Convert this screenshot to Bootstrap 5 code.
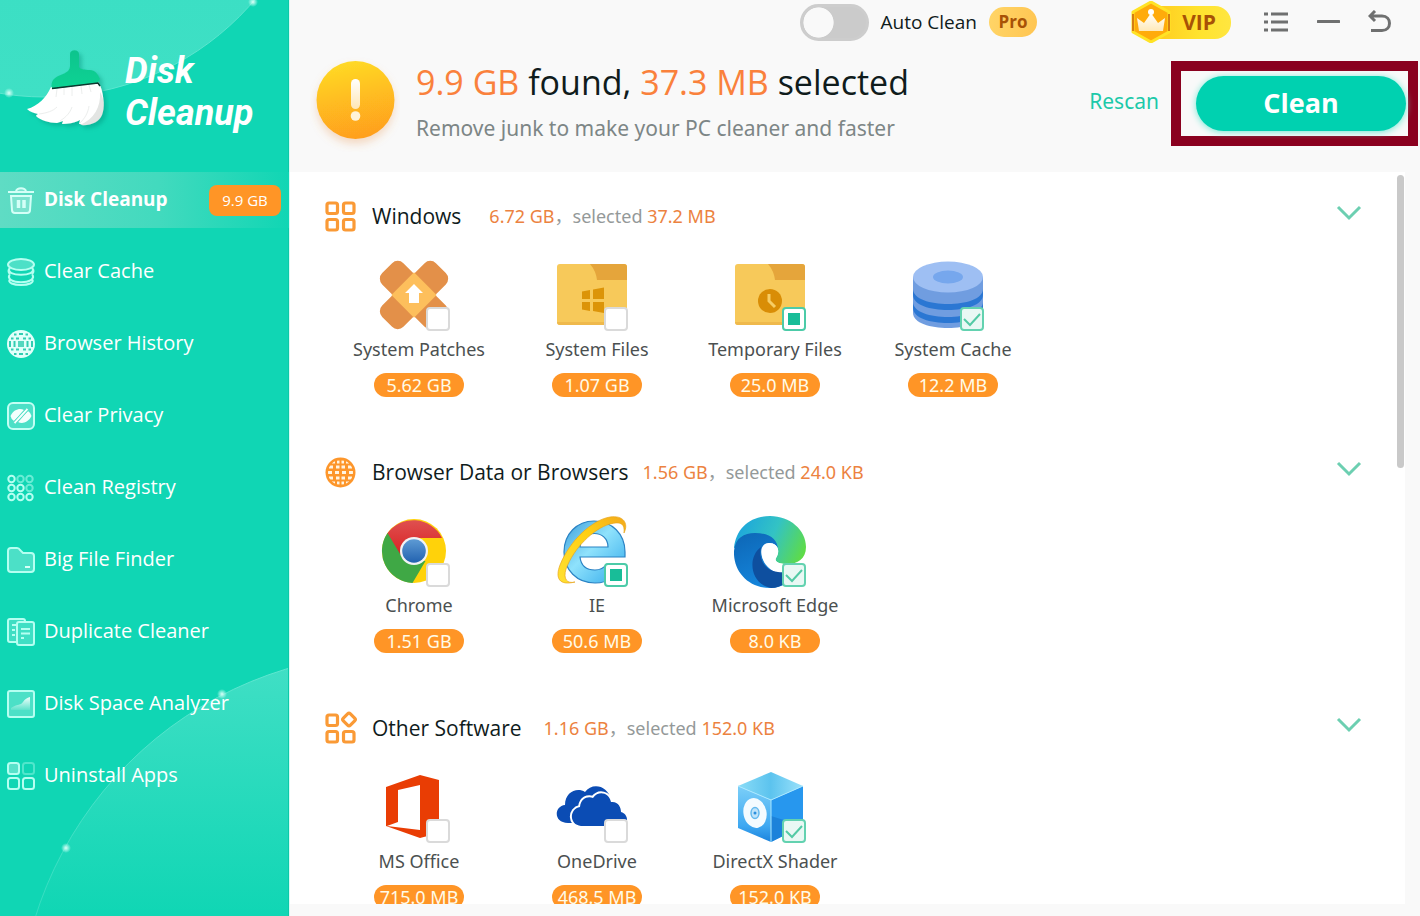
<!DOCTYPE html>
<html lang="en">
<head>
<meta charset="utf-8">
<meta name="viewport" content="width=device-width, initial-scale=1">
<title>Disk Cleanup</title>
<link href="https://cdn.jsdelivr.net/npm/bootstrap@5.3.0/dist/css/bootstrap.min.css" rel="stylesheet">
<style>
:root { --teal:#10d6b4; --orange:#ff9526; --num:#ec8240; }
body { font-family:"Open Sans","Noto Sans","Noto Sans CJK SC",sans-serif; background:#f9f9f9; color:#101c1c; }
a { text-decoration:none; }
svg { display:block; flex-shrink:0; }

.side { flex:0 0 290px; background:var(--teal); border-right:1px solid #d5fbf5; box-shadow:inset -1px 0 0 #0cc9a8; }
.deco-top { top:0; left:0; }
.deco-bottom { bottom:0; right:1px; }
.brand { height:172px; padding:12px 0 0 24px; gap:16px; }
.brand-name { font:italic 700 36px/42px Roboto,sans-serif; color:#fff; }
.menu { gap:16px; }
.menu-link { height:56px; padding:0 8px 0 7px; gap:9px; color:#fff; font-size:20px; }
.menu-link span { padding-bottom:2px; }
.menu-link.active { font-size:19px; font-weight:700; background:linear-gradient(90deg,#5fdcc4 0,#42dabe 55%,var(--teal) 100%); }
.menu-link .size-tag { background:var(--orange); border-radius:8px; width:72px; height:31px; font-size:15px; line-height:31px; font-weight:400; }

.topbar { height:44px; padding-right:28px; }
.auto-switch.form-check-input { width:69px; height:37px; margin:0; border:3px solid #cdcdcd; border-radius:19px; background-color:#cbcbcb; background-image:radial-gradient(circle closest-side,#f9f9f9 95%,transparent); background-size:31px 31px; background-repeat:no-repeat; background-position:left center; }
.auto-label { font-size:19px; line-height:28px; }
.pro { width:48px; height:30px; margin-left:12px; border-radius:15px; line-height:29px; font-size:17px; font-weight:700; color:#a85206; background:linear-gradient(100deg,#ffd567,#ffc552); }
.vip { color:#a85206; font-size:21px; font-weight:700; height:42px; width:100px; margin-left:94px; }
.vip-plate { left:20px; right:0; top:5px; height:33px; border-radius:4px 16px 16px 4px; background:linear-gradient(90deg,#ffc91e,#ffe32e 60%,#ffe640); line-height:33px; padding-right:15px; }
.vip-gem { left:0; top:0; }
.bare { background:none; border:0; padding:0; }

.summary { height:128px; padding:0 2px 0 20px; gap:16px; }
.headline { padding-top:14px; }
.found { font-size:34px; line-height:48px; }
.hint { font-family:"Noto Sans",sans-serif; font-size:21px; line-height:44px; color:#7d8686; }
.hot { color:#fa813c; }
.actions { padding-top:17px; }
.rescan { font-family:"Noto Sans",sans-serif; color:#1cc9a9; font-size:21px; padding-bottom:4px; }
.frame { border:10px solid #8a001f; padding:5px 2px 5px 15px; }
.clean { display:block; width:210px; height:55px; border:0; border-radius:28px; background:#00d1b0; color:#fff; font-size:27px; font-weight:700; box-shadow:0 1px 7px #6fe8d4; }
.clean:hover { background:#00c5a6; }

.results { background:#fff; margin:0 15px 12px 0; }
.scroll-thumb { top:3px; right:1px; width:7px; height:293px; border-radius:4px; background:#c9c9c9; }
.group-head { height:88px; padding:0 43px 0 34px; }
.group-title { font-size:21px; line-height:32px; margin:0 0 0 16px; font-weight:400; }
.stat { font-family:"Noto Sans","Noto Sans CJK SC",sans-serif; font-size:18px; line-height:32px; color:#949999; }
.stat b { font-weight:400; color:var(--num); }
.after-wide { margin-left:28px; }
.after-mid { margin-left:22px; }
.after-tight { margin-left:14px; }
.tiles { padding:0 40px 31px; }
.tile { width:178px; }
.art { width:72px; height:72px; margin-right:10px; }
.tick.form-check-input { right:0; bottom:1px; width:24px; height:24px; margin:0; border:2px solid #dadada; border-radius:4px; background-color:#fff; background-size:100% 100%; }
.tick.form-check-input:checked { border-color:#63d2b0; background-color:#e9f8f4; background-image:url("data:image/svg+xml,%3Csvg xmlns='http://www.w3.org/2000/svg' viewBox='0 0 20 20'%3E%3Cpath d='M2 10l6 6 10-11' fill='none' stroke='%2353caa5' stroke-width='2'/%3E%3C/svg%3E"); }
.tick.form-check-input[type=checkbox]:indeterminate { border-color:#4ccba8; background-color:#fff; background-image:url("data:image/svg+xml,%3Csvg xmlns='http://www.w3.org/2000/svg' viewBox='0 0 20 20'%3E%3Cpath d='M4 4h12v12H4z' fill='%2318bd98'/%3E%3C/svg%3E"); }
.tile-name { font-family:"Noto Sans",sans-serif; font-size:18px; line-height:34px; color:#4b5050; }
.pill { font-family:"Noto Sans",sans-serif; width:90px; height:24px; margin-top:7px; border-radius:12px; background:var(--orange); color:#fffbe8; font-size:18px; line-height:24px; }
</style>
</head>
<body>
<div class="d-flex vh-100 overflow-hidden">

<aside class="side position-relative overflow-hidden">
  <svg class="deco-top position-absolute" width="289" height="110" viewBox="0 0 289 110" aria-hidden="true">
    <defs><linearGradient id="dt" x1="0" y1="0" x2="0" y2="1"><stop offset="0.6" stop-color="#38dec3"/><stop offset="1" stop-color="#3fe0c5"/></linearGradient>
    <radialGradient id="sp"><stop offset="0" stop-color="#dffff8"/><stop offset=".4" stop-color="#bffbf0" stop-opacity=".7"/><stop offset="1" stop-color="#bffbf0" stop-opacity="0"/></radialGradient></defs>
    <circle cx="45" cy="-178" r="275" fill="url(#dt)" stroke="#5be6cf"/>
    <circle cx="9" cy="93" r="5" fill="url(#sp)"/><circle cx="253" cy="2" r="5" fill="url(#sp)"/>
  </svg>
  <svg class="deco-bottom position-absolute" width="289" height="250" viewBox="0 0 289 250" aria-hidden="true">
    <defs><linearGradient id="db" gradientUnits="userSpaceOnUse" x1="0" y1="0" x2="0" y2="250"><stop offset="0" stop-color="#40dfc5"/><stop offset="1" stop-color="#10d6b4"/></linearGradient>
    <linearGradient id="dl" gradientUnits="userSpaceOnUse" x1="0" y1="0" x2="0" y2="250"><stop offset="0" stop-color="#5fe6d0"/><stop offset="1" stop-color="#34ddc0"/></linearGradient></defs>
    <circle cx="396" cy="364" r="377" fill="url(#db)" stroke="url(#dl)"/>
    <circle cx="223" cy="28" r="5" fill="url(#sp)"/><circle cx="67" cy="182" r="5" fill="url(#sp)"/>
  </svg>

  <div class="brand d-flex align-items-center position-relative">
    <svg width="85" height="90" viewBox="0 0 85 90" aria-hidden="true">
      <defs><linearGradient id="bh" x1="0" y1="0" x2="0" y2="1"><stop offset="0" stop-color="#0fc48d"/><stop offset="1" stop-color="#0bd394"/></linearGradient>
      <filter id="bs" x="-20%" y="-20%" width="140%" height="140%"><feDropShadow dx="3" dy="3" stdDeviation="2" flood-color="#078a74" flood-opacity=".4"/></filter></defs>
      <g filter="url(#bs)">
      <path d="M27 40C22 51 14 59 3 62c3 3 7 4 11 5-1 1-2 1-2 2 4 4 13 7 21 7l6-2-1 3c6 0 12-1 16-3l2-1-1 4c11 1 19-3 22-10 4-9 3-22-3-33z" fill="#fff"/>
      <path d="M76 45c1 15-6 27-20 33 11 1 19-3 22-10 3-8 2-17-2-23z" fill="#e3e5e3"/>
      <path d="M36 74c6-4 10-8 12-14M56 76c5-5 8-10 9-17M15 67c8-1 14-3 18-7M33 42l-1 8M40 40v8M48 40v9M57 39l1 8M65 38l2 7" fill="none" stroke="#eceeed" stroke-width="1"/>
      <path d="M46 7c0-5 9-5 9 0v13c1 2 5 3 11 3 5 0 8 4 10 9l-2 4-46 6c-2-9 3-12 11-15 5-2 7-5 7-8z" fill="url(#bh)"/>
      <path d="M28 41.500l46-5.500 2 3" fill="none" stroke="#07372e" stroke-width="1.500"/></g>
    </svg>
    <div class="brand-name">Disk<br>Cleanup</div>
  </div>

  <nav class="menu d-flex flex-column position-relative" aria-label="Tools">
    <a href="#" class="menu-link active d-flex align-items-center" aria-current="page">
      <svg width="28" height="28" viewBox="0 0 28 28" fill="none" stroke="#d4fff7" stroke-width="2"><path d="M1 6h26M9 6c0-5 10-5 10 0M4 10l1 14c0 2 1 3 3 3h12c2 0 3-1 3-3l1-14z" fill="#fff" fill-opacity=".2"/><path d="M11.500 14v8M17 14v8" stroke-width="3.500"/></svg>
      <span>Disk Cleanup</span><span class="size-tag ms-auto text-center">9.9 GB</span></a>
    <a href="#" class="menu-link d-flex align-items-center">
      <svg width="28" height="28" viewBox="0 0 28 28" fill="none" stroke="#b5fff1" stroke-width="2"><ellipse cx="14" cy="6.500" rx="13" ry="5.500" fill="#fff" fill-opacity=".25"/><path d="M3 10c-7 9 29 9 22 0M3 16c-8 11 30 11 22 0M3 21c-6 8 28 8 22 0M3 16q-3-3 0-6M25 16q3-3 0-6M3 21q-2-2 0-5M25 21q2-2 0-5"/></svg>
      <span>Clear Cache</span></a>
    <a href="#" class="menu-link d-flex align-items-center">
      <svg width="28" height="28" viewBox="0 0 28 28"><circle cx="14" cy="14" r="14" fill="#e2fffa"/><g fill="none" stroke="#31cdb2" stroke-width="2"><path d="M7 4.500h2.500M12 4h4M18.500 4.500h2.500M4 8.500h2.500M9 8.500h3M16 8.500h3M21.500 8.500h2.500M4 19.500h2.500M9 19.500h3M16 19.500h3M21.500 19.500h2.500M7 24h2.500M12 24h4M18.500 24h2.500"/><path d="M3 11v6M7.500 11v6M20.500 11v6M25 11v6"/></g><path d="M11 11h6v6h-6z" fill="#53d7bf"/></svg>
      <span>Browser History</span></a>
    <a href="#" class="menu-link d-flex align-items-center">
      <svg width="28" height="28" viewBox="0 0 28 28"><rect x="1" y="1" width="26" height="26" rx="5" fill="#fff" fill-opacity=".25" stroke="#c2fff4" stroke-width="2"/><path d="M3.500 14C7 7 13 6 17 8L7 19q-3-2-3.500-5zM24.500 14C21 21 15 22 11 20L21 9q3 2 3.500 5z" fill="#f4fffd"/><path d="M20.500 7L7.500 21" stroke="#f4fffd" stroke-width="2"/><path d="M18.500 7L6.500 20M21.500 8L9.500 21" stroke="#5fdfc9" stroke-width="1"/></svg>
      <span>Clear Privacy</span></a>
    <a href="#" class="menu-link d-flex align-items-center">
      <svg width="28" height="28" viewBox="0 0 28 28" fill="none" stroke="#b5fff1" stroke-width="2"><g><circle cx="4.500" cy="5" r="3.200"/><circle cx="4.500" cy="14" r="3.200"/><circle cx="13.500" cy="14" r="3.200"/><circle cx="4.500" cy="23" r="3.200"/><circle cx="13.500" cy="23" r="3.200"/><circle cx="22.500" cy="23" r="3.200"/></g><g opacity=".55"><circle cx="13.500" cy="5" r="3.200"/><circle cx="22.500" cy="5" r="3.200"/><circle cx="22.500" cy="14" r="3.200"/></g></svg>
      <span>Clean Registry</span></a>
    <a href="#" class="menu-link d-flex align-items-center">
      <svg width="28" height="28" viewBox="0 0 28 28"><path d="M1 5q0-3 3-3h6q2 0 3 2l3 3h8q3 0 3 3v13q0 3-3 3H4q-3 0-3-3z" fill="#fff" fill-opacity=".25" stroke="#b5fff1" stroke-width="2"/><path d="M18 21h5" stroke="#d9fff8" stroke-width="2"/></svg>
      <span>Big File Finder</span></a>
    <a href="#" class="menu-link d-flex align-items-center">
      <svg width="28" height="28" viewBox="0 0 28 28" fill="none" stroke="#b5fff1" stroke-width="2"><path d="M10 24H3q-2 0-2-2V3q0-2 2-2h13q2 0 2 2M5 7h4M5 12h3M5 17h3" fill="#fff" fill-opacity=".2"/><rect x="10" y="4" width="17" height="23" rx="2" fill="#3fdfc4"/><path d="M14 11h9M14 15.500h9M14 20h3"/></svg>
      <span>Duplicate Cleaner</span></a>
    <a href="#" class="menu-link d-flex align-items-center">
      <svg width="28" height="28" viewBox="0 0 28 28"><defs><linearGradient id="ar" x1="0" y1="0" x2="0" y2="1"><stop offset="0" stop-color="#effffc"/><stop offset="1" stop-color="#5fe2cb"/></linearGradient></defs><rect x="1" y="1" width="26" height="26" rx="2" fill="#fff" fill-opacity=".25" stroke="#b5fff1" stroke-width="2"/><path d="M4 18c8-5 9-2 12-6 2-3 4-4 7-5v13H4z" fill="url(#ar)"/></svg>
      <span>Disk Space Analyzer</span></a>
    <a href="#" class="menu-link d-flex align-items-center">
      <svg width="28" height="28" viewBox="0 0 28 28" fill="none" stroke="#b5fff1" stroke-width="2"><rect x="1" y="1" width="11" height="11" rx="2.500" fill="#fff" fill-opacity=".3"/><rect x="16" y="1" width="11" height="11" rx="2.500" opacity=".4"/><rect x="1" y="16" width="11" height="11" rx="2.500"/><rect x="16" y="16" width="11" height="11" rx="2.500"/></svg>
      <span>Uninstall Apps</span></a>
  </nav>
</aside>

<main class="d-flex flex-column flex-grow-1 overflow-hidden">
  <div class="topbar d-flex align-items-center justify-content-end flex-shrink-0">
    <input class="auto-switch form-check-input" type="checkbox" role="switch" id="auto">
    <label class="auto-label ms-2 ps-1" for="auto">Auto Clean</label>
    <span class="pro text-center">Pro</span>
    <button type="button" class="vip bare position-relative" aria-label="VIP">
      <span class="vip-plate position-absolute text-end">VIP</span>
      <svg class="vip-gem position-absolute" width="42" height="42" viewBox="0 0 42 42"><defs><linearGradient id="cr" x1="0" y1="0" x2="0" y2="1"><stop offset="0" stop-color="#fff"/><stop offset="1" stop-color="#ffe9b8"/></linearGradient></defs><path d="M20 1l18 10v20L20 41 2 31V11z" fill="#ffab0b" stroke="#ffe326" stroke-width="3" stroke-linejoin="round"/><path d="M2 13v17M38 13v17" stroke="#d57e12" stroke-width="2"/><path d="M8 30L6 17l7 5 7-10 7 10 7-5-2 13z" fill="url(#cr)"/><circle cx="20" cy="11" r="3" fill="#fff"/></svg>
    </button>
    <button type="button" class="bare ms-4 ps-2" aria-label="Menu"><svg width="26" height="22" viewBox="0 0 26 22" stroke="#6f7070" stroke-width="3"><path d="M1 3h4M8 3h17M1 11h4M8 11h17M1 19h4M8 19h17"/></svg></button>
    <button type="button" class="bare ms-4 ps-1" aria-label="Minimize"><svg width="23" height="22" viewBox="0 0 23 22"><path d="M1 10.500h21" stroke="#6f7070" stroke-width="3" stroke-linecap="round"/></svg></button>
    <button type="button" class="bare ms-4 ps-1" aria-label="Back"><svg width="24" height="24" viewBox="0 0 24 24" fill="none" stroke="#6f7070" stroke-width="3"><path d="M7 1L2 6 7 11M2 6h12c10 0 10 14.500 0 14.500H3"/></svg></button>
  </div>

  <header class="summary d-flex flex-shrink-0">
    <svg width="90" height="100" viewBox="0 0 90 100" class="mt-2" aria-hidden="true"><defs><linearGradient id="al" x1=".2" y1="0" x2=".4" y2="1"><stop offset="0" stop-color="#ffdc26"/><stop offset=".5" stop-color="#ffbd20"/><stop offset="1" stop-color="#ffa01f"/></linearGradient><linearGradient id="ex" x1="0" y1="0" x2="0" y2="1"><stop offset="0" stop-color="#fff"/><stop offset="1" stop-color="#ffe7b5"/></linearGradient><filter id="as" x="-20%" y="-20%" width="140%" height="140%"><feDropShadow dx="0" dy="5" stdDeviation="4" flood-color="#e8903c" flood-opacity=".3"/></filter></defs><circle cx="45.500" cy="48" r="39" fill="url(#al)" filter="url(#as)"/><rect x="41" y="27" width="9" height="30" rx="4.500" fill="url(#ex)"/><circle cx="45.500" cy="64" r="4.800" fill="#fff3d9"/></svg>
    <div class="headline text-nowrap">
      <div class="found"><span class="hot">9.9 GB</span> found, <span class="hot">37.3 MB</span> selected</div>
      <div class="hint">Remove junk to make your PC cleaner and faster</div>
    </div>
    <div class="actions d-flex align-items-start ms-auto">
      <div class="d-flex align-items-center">
        <a href="#" class="rescan me-2 pe-1">Rescan</a>
        <div class="frame"><button type="button" class="clean">Clean</button></div>
      </div>
    </div>
  </header>

  <div class="results position-relative flex-grow-1 overflow-hidden">
    <div class="scroll-thumb position-absolute"></div>

    <section>
      <div class="group-head d-flex align-items-center">
        <svg width="32" height="32" viewBox="0 0 32 32" fill="none" stroke="#fa9a36" stroke-width="3.200"><rect x="3" y="3" width="10.500" height="10.500" rx="2"/><rect x="19.500" y="3" width="10.500" height="10.500" rx="2"/><rect x="3" y="19.500" width="10.500" height="10.500" rx="2"/><rect x="19.500" y="19.500" width="10.500" height="10.500" rx="2"/></svg>
        <h2 class="group-title">Windows</h2>
        <div class="stat after-wide"><b>6.72 GB</b>，selected <b>37.2 MB</b></div>
        <button type="button" class="bare ms-auto" aria-label="Collapse Windows"><svg width="26" height="22" viewBox="0 0 26 22"><path d="M2 2l11 11L24 2" fill="none" stroke="#6ccfb1" stroke-width="3"/></svg></button>
      </div>
      <div class="tiles d-flex flex-wrap">
        <div class="tile d-flex flex-column align-items-center">
          <div class="art position-relative">
            <svg width="72" height="72" viewBox="0 0 72 72"><g transform="rotate(45 36 35)" fill="#e39049"><rect x="-2" y="20" width="76" height="30" rx="8"/><rect x="21" y="-3" width="30" height="76" rx="8"/><path d="M20 19h32v32H20z" fill="#fdbf5c"/></g><path d="M36 24l9 9h-4v10H31V33h-4z" fill="#fff"/></svg>
            <input type="checkbox" class="tick form-check-input position-absolute" id="c1"></div>
          <label class="tile-name" for="c1">System Patches</label><span class="pill text-center">5.62 GB</span>
        </div>
        <div class="tile d-flex flex-column align-items-center">
          <div class="art position-relative">
            <svg width="72" height="72" viewBox="0 0 72 72"><rect x="1" y="4" width="70" height="61" rx="3" fill="#f7c95a"/><path d="M34 4h34q3 0 3 3v13H41q-1-9-7-16z" fill="#e5a53b"/><path d="M1 62h70q0 3-3 3H4q-3 0-3-3z" fill="#efb94c"/><path d="M26 31.500l8-1.500v9h-8zM37 29.500l11-2v11.500H37zM26 42h8v9l-8-1.500zM37 42h11v11l-11-2z" fill="#dc9408"/></svg>
            <input type="checkbox" class="tick form-check-input position-absolute" id="c2"></div>
          <label class="tile-name" for="c2">System Files</label><span class="pill text-center">1.07 GB</span>
        </div>
        <div class="tile d-flex flex-column align-items-center">
          <div class="art position-relative">
            <svg width="72" height="72" viewBox="0 0 72 72"><rect x="1" y="4" width="70" height="61" rx="3" fill="#f7c95a"/><path d="M34 4h34q3 0 3 3v13H41q-1-9-7-16z" fill="#e5a53b"/><path d="M1 62h70q0 3-3 3H4q-3 0-3-3z" fill="#efb94c"/><circle cx="36" cy="41" r="12" fill="#d98d06"/><path d="M35 34v7l6 6" fill="none" stroke="#f7cd65" stroke-width="3"/></svg>
            <input type="checkbox" class="tick partial form-check-input position-absolute" id="c3"></div>
          <label class="tile-name" for="c3">Temporary Files</label><span class="pill text-center">25.0 MB</span>
        </div>
        <div class="tile d-flex flex-column align-items-center">
          <div class="art position-relative">
            <svg width="72" height="72" viewBox="0 0 72 72"><path d="M1 17v36c0 20 70 20 70 0V17z" fill="#709de0"/><path d="M1 29c0 20 70 20 70 0v6c0 20-70 20-70 0zM1 42c0 20 70 20 70 0v6c0 20-70 20-70 0z" fill="#2b77d3"/><ellipse cx="36" cy="17" rx="35" ry="15.500" fill="#9ebff3"/><ellipse cx="36" cy="17" rx="15" ry="6.500" fill="#76a7ed"/></svg>
            <input type="checkbox" class="tick form-check-input position-absolute" id="c4" checked></div>
          <label class="tile-name" for="c4">System Cache</label><span class="pill text-center">12.2 MB</span>
        </div>
      </div>
    </section>

    <section>
      <div class="group-head d-flex align-items-center">
        <svg width="32" height="32" viewBox="0 0 32 32"><defs><clipPath id="gc"><circle cx="16.500" cy="16.500" r="12.500"/></clipPath></defs><circle cx="16.500" cy="16.500" r="15" fill="#fd962b"/><g clip-path="url(#gc)" fill="none" stroke="#fff4e2" stroke-width="3"><path d="M5 11h4M12 11h3.500M17.500 11h3.500M24 11h4M3 16.500h5M11 16.500h4M18 16.500h4M25 16.500h4M5 22h4M12 22h3.500M17.500 22h3.500M24 22h4M8 6h3M13 6h2.500M17.500 6h2.500M22 6h3M8 27h3M13 27h2.500M17.500 27h2.500M22 27h3"/></g></svg>
        <h2 class="group-title">Browser Data or Browsers</h2>
        <div class="stat after-tight"><b>1.56 GB</b>，selected <b>24.0 KB</b></div>
        <button type="button" class="bare ms-auto" aria-label="Collapse browsers"><svg width="26" height="22" viewBox="0 0 26 22"><path d="M2 2l11 11L24 2" fill="none" stroke="#6ccfb1" stroke-width="3"/></svg></button>
      </div>
      <div class="tiles d-flex flex-wrap">
        <div class="tile d-flex flex-column align-items-center">
          <div class="art position-relative">
            <svg width="72" height="72" viewBox="0 0 72 72"><defs><linearGradient id="cb" x1="0" y1="0" x2="0" y2="1"><stop offset="0" stop-color="#5e9bd4"/><stop offset="1" stop-color="#2262b0"/></linearGradient><linearGradient id="crd" x1="0" y1="0" x2="0" y2="1"><stop offset="0" stop-color="#df5050"/><stop offset="1" stop-color="#d81f1f"/></linearGradient></defs><circle cx="36" cy="35" r="32" fill="#ffd20a"/><path d="M36 22h28A32 32 0 0 0 9 18l14 24z" fill="url(#crd)"/><path d="M9.500 17A32 32 0 0 0 34.500 67l13-22-23-3z" fill="#3fa845"/><circle cx="36" cy="35" r="14" fill="#f1f3f4"/><circle cx="36" cy="35" r="11.800" fill="url(#cb)"/></svg>
            <input type="checkbox" class="tick form-check-input position-absolute" id="c5"></div>
          <label class="tile-name" for="c5">Chrome</label><span class="pill text-center">1.51 GB</span>
        </div>
        <div class="tile d-flex flex-column align-items-center">
          <div class="art position-relative">
            <svg width="72" height="72" viewBox="0 0 72 72"><defs><linearGradient id="ie" x1="0" y1="0" x2="1" y2="1"><stop offset="0" stop-color="#3f9fdb"/><stop offset=".45" stop-color="#8fe2fc"/><stop offset="1" stop-color="#30a8ea"/></linearGradient><linearGradient id="ir" x1="0" y1="1" x2="1" y2="0"><stop offset="0" stop-color="#ffe032"/><stop offset=".6" stop-color="#ffcf12"/><stop offset="1" stop-color="#f3a91c"/></linearGradient></defs><path fill-rule="evenodd" d="M38 5c18 0 31 13 31 31v5H24c1 9 7 13 15 13 5 0 9-2 12-6h17C64 59 53 67 39 67 21 67 8 54 8 36S21 5 38 5zM24 31h28c0-18-27-18-28 0z" fill="url(#ie)" stroke="#2b83c4" stroke-width="1.200"/><path d="M68 17C73 7 67-1 54 1 36 4 14 24 4 49-1 62 3 70 19 66 11 68 7 63 10 53 18 32 37 13 54 8c11-3 15 0 14 9z" fill="url(#ir)" stroke="#e8a51c" stroke-width=".7"/></svg>
            <input type="checkbox" class="tick partial form-check-input position-absolute" id="c6"></div>
          <label class="tile-name" for="c6">IE</label><span class="pill text-center">50.6 MB</span>
        </div>
        <div class="tile d-flex flex-column align-items-center">
          <div class="art position-relative">
            <svg width="72" height="72" viewBox="0 0 72 72"><defs><linearGradient id="e1" x1="0" y1=".4" x2="1" y2=".7"><stop offset="0" stop-color="#1da6dc"/><stop offset=".5" stop-color="#33c3c4"/><stop offset="1" stop-color="#5fdc45"/></linearGradient><linearGradient id="e2" x1="0" y1="0" x2=".5" y2="1"><stop offset="0" stop-color="#0d66b5"/><stop offset="1" stop-color="#1587de"/></linearGradient></defs><path d="M0 32C2 12 16 0 36 0c20 0 36 14 36 31 0 12-9 17-18 17-8 0-14-2-12-6 5-8 1-16-8-16z" fill="url(#e1)"/><path d="M0 35C1 22 10 17 21 17c14 0 23 6 23 17 0-4-4-7-9-7-10 4-11 22 8 30 8 3 15 2 22-2-7 11-18 17-29 17C14 72-1 55 0 35z" fill="url(#e2)"/><path d="M27 31c-3 12 4 24 17 25 8 1 14-1 21-4-7 12-17 20-28 20-21-4-24-31-10-41z" fill="#0e4f9f"/><path d="M35 27c-9 0-10 12-4 19 4 5 12 9 21 9V48c-8 0-12-3-10-6 5-8 1-15-7-15z" fill="#fff"/></svg>
            <input type="checkbox" class="tick form-check-input position-absolute" id="c7" checked></div>
          <label class="tile-name" for="c7">Microsoft Edge</label><span class="pill text-center">8.0 KB</span>
        </div>
      </div>
    </section>

    <section>
      <div class="group-head d-flex align-items-center">
        <svg width="32" height="32" viewBox="0 0 32 32" overflow="visible" fill="none" stroke="#fa9a36" stroke-width="3.200"><rect x="3" y="3" width="10.500" height="10.500" rx="2"/><rect x="20" y="2.500" width="10" height="10" rx="2" transform="rotate(45 25 7.500)"/><rect x="3" y="19.500" width="10.500" height="10.500" rx="2"/><rect x="19.500" y="19.500" width="10.500" height="10.500" rx="2"/></svg>
        <h2 class="group-title">Other Software</h2>
        <div class="stat after-mid"><b>1.16 GB</b>，selected <b>152.0 KB</b></div>
        <button type="button" class="bare ms-auto" aria-label="Collapse other software"><svg width="26" height="22" viewBox="0 0 26 22"><path d="M2 2l11 11L24 2" fill="none" stroke="#6ccfb1" stroke-width="3"/></svg></button>
      </div>
      <div class="tiles d-flex flex-wrap">
        <div class="tile d-flex flex-column align-items-center">
          <div class="art position-relative">
            <svg width="72" height="72" viewBox="0 0 72 72"><path fill-rule="evenodd" d="M8 15L42 3l19 5v53l-19 5L8 54zM20 18v32L9 54l33 4V13z" fill="#e93d04"/></svg>
            <input type="checkbox" class="tick form-check-input position-absolute" id="c8"></div>
          <label class="tile-name" for="c8">MS Office</label><span class="pill text-center">715.0 MB</span>
        </div>
        <div class="tile d-flex flex-column align-items-center">
          <div class="art position-relative">
            <svg width="72" height="72" viewBox="0 0 72 72"><path d="M12 51C-3 51-2 34 9 33c0-13 12-18 20-13 7-10 23-7 26 8v23z" fill="#0b4cb4"/><path d="M25 54c-12-1-12-17-1-19 1-9 8-11 13-9 6-8 16-5 18 4 7-1 10 5 10 10 8 2 8 14 0 14z" fill="#0b4cb4" stroke="#fff" stroke-width="4" paint-order="stroke"/></svg>
            <input type="checkbox" class="tick form-check-input position-absolute" id="c9"></div>
          <label class="tile-name" for="c9">OneDrive</label><span class="pill text-center">468.5 MB</span>
        </div>
        <div class="tile d-flex flex-column align-items-center">
          <div class="art position-relative">
            <svg width="72" height="72" viewBox="0 0 72 72"><defs><linearGradient id="xl" x1="0" y1="0" x2="0" y2="1"><stop offset="0" stop-color="#7ccff8"/><stop offset=".7" stop-color="#3fa9f2"/><stop offset="1" stop-color="#1b83dd"/></linearGradient><linearGradient id="xt" x1="0" y1="0" x2="1" y2="0"><stop offset="0" stop-color="#8adcf7"/><stop offset=".5" stop-color="#5cc3ee"/><stop offset="1" stop-color="#9be2fb"/></linearGradient></defs><path d="M4 14L37 28v42L4 56z" fill="url(#xl)"/><path d="M69 14L37 28v42l32-16z" fill="#2797ee"/><path d="M37 44l32 10-32 16z" fill="#1c82da"/><path d="M4 14L37 0l32 14-32 14z" fill="url(#xt)"/><path d="M4 14l33 14 32-14M37 28v42" fill="none" stroke="#a9e7ff" stroke-width="1"/><ellipse cx="21" cy="41" rx="11.500" ry="15" fill="#f4fbff" transform="rotate(-12 21 41)"/><ellipse cx="21" cy="41" rx="4" ry="5.500" fill="#bfe3fa" stroke="#62b8ee" stroke-width="1.500"/><circle cx="21" cy="41" r="1.500" fill="#2b8fdd"/></svg>
            <input type="checkbox" class="tick form-check-input position-absolute" id="c10" checked></div>
          <label class="tile-name" for="c10">DirectX Shader</label><span class="pill text-center">152.0 KB</span>
        </div>
      </div>
    </section>
  </div>
</main>
</div>
<script src="https://cdn.jsdelivr.net/npm/bootstrap@5.3.0/dist/js/bootstrap.bundle.min.js"></script>
<script>
document.querySelectorAll('.partial').forEach(box => { box.indeterminate = true; });
</script>
</body>
</html>
